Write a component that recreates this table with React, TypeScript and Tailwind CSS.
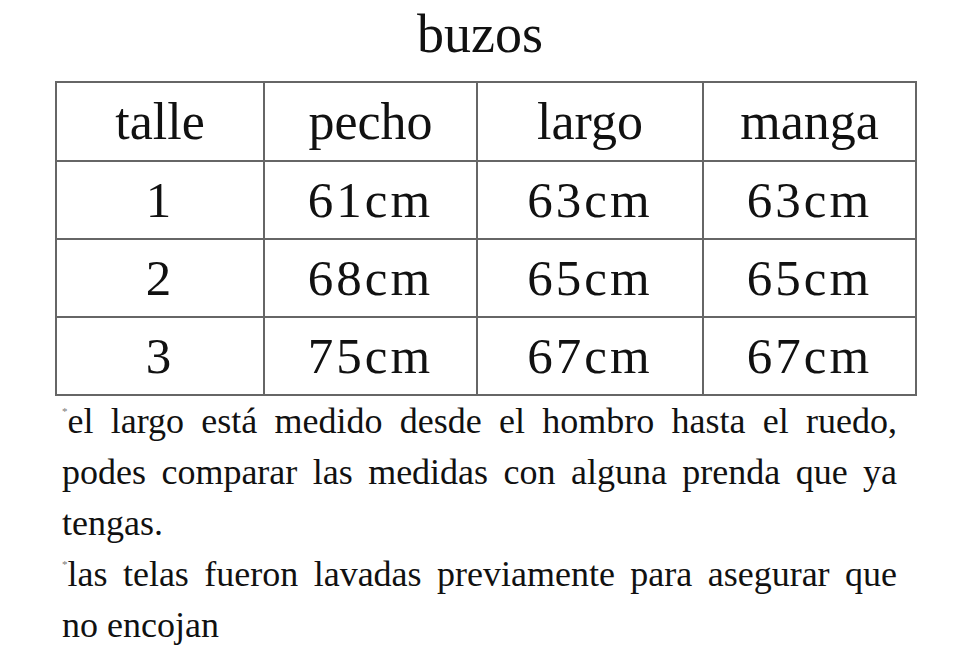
const HEADERS = ["talle", "pecho", "largo", "manga"];

const ROWS = [
  ["1", "61cm", "63cm", "63cm"],
  ["2", "68cm", "65cm", "65cm"],
  ["3", "75cm", "67cm", "67cm"],
];

const NOTES = [
  { text: "el largo está medido desde el hombro hasta el ruedo,", star: true, full: true },
  { text: "podes comparar las medidas con alguna prenda que ya", star: false, full: true },
  { text: "tengas.", star: false, full: false },
  { text: "las telas fueron lavadas previamente para asegurar que", star: true, full: true },
  { text: "no encojan", star: false, full: false },
];

const serif = "font-['Liberation_Serif','Times_New_Roman',serif]";

export default function App() {
  return (
    <div className={`w-[960px] h-[668px] bg-white text-[#111] ${serif} overflow-hidden`}>
      <h1 className="pt-[2px] mb-[15px] text-center text-[54px] leading-[64px] font-normal">buzos</h1>

      <table className="ml-[55px] w-[860px] table-fixed border-collapse">
        <colgroup>
          <col className="w-[208px]" />
          <col className="w-[213px]" />
          <col className="w-[226px]" />
          <col className="w-[213px]" />
        </colgroup>
        <thead>
          <tr className="h-[79px]">
            {HEADERS.map((h) => (
              <th
                key={h}
                className="border-2 border-[#666] p-0 text-center align-middle text-[52px] leading-none font-normal"
              >
                {h}
              </th>
            ))}
          </tr>
        </thead>
        <tbody>
          {ROWS.map((row) => (
            <tr key={row[0]} className="h-[78px]">
              {row.map((cell, i) => (
                <td
                  key={i}
                  className="border-2 border-[#666] p-0 text-center align-middle text-[51px] leading-none tracking-[3px]"
                >
                  {cell}
                </td>
              ))}
            </tr>
          ))}
        </tbody>
      </table>

      <div className="ml-[62px] w-[835px] text-[36px] leading-[51px]">
        {NOTES.map((n, i) => (
          <p
            key={i}
            className={`whitespace-nowrap ${n.full ? "text-justify [text-align-last:justify]" : "text-left"}`}
          >
            {n.star && <span className="align-top text-[11px] leading-[30px] text-[#777]">*</span>}
            {n.text}
          </p>
        ))}
      </div>
    </div>
  );
}
